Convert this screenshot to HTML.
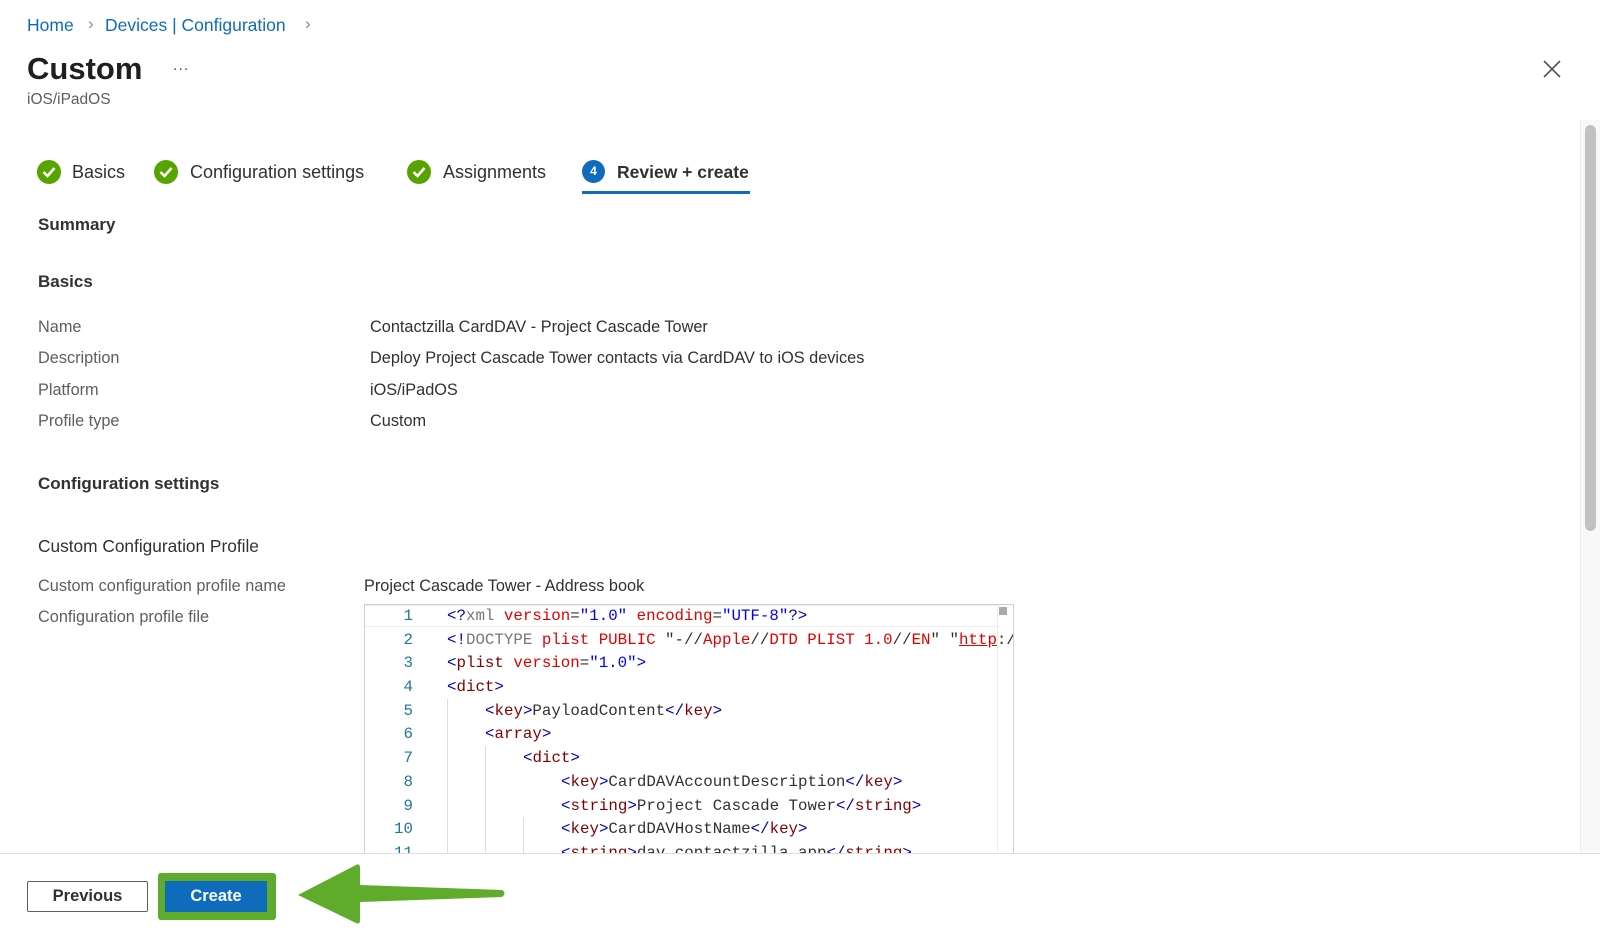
<!DOCTYPE html>
<html><head><meta charset="utf-8"><style>
*{margin:0;padding:0;box-sizing:border-box}
body{width:1600px;height:939px;background:#fff;font-family:"Liberation Sans",sans-serif;color:#323130;position:relative;overflow:hidden}
.a{position:absolute;white-space:nowrap}
.bc{color:#0f6cbd;font-size:17.5px;top:15px}
.lbl{font-size:16.3px;color:#605e5c}
.val{font-size:16.3px;color:#323130}
.h{font-size:17px;font-weight:bold;color:#323130}
.tab{font-size:18px;color:#323130;top:162px}
.chk{width:24px;height:24px;border-radius:50%;background:#57a300;top:160px}
.chk svg{position:absolute;left:5px;top:6px}
.code{font-family:"Liberation Mono",monospace;font-size:15.8px;line-height:23.7px}
.ln{position:absolute;left:0;width:48px;text-align:right;color:#237893}
.t{color:#800000}.at{color:#e50000}.s{color:#0000ff}.b{color:#800000}.p{color:#0000c0}
</style></head><body>
<div class="a bc" style="left:27px">Home</div>
<div class="a" style="left:88px;top:14px;color:#8a8886;font-size:17px">&#x203A;</div>
<div class="a bc" style="left:105px">Devices | Configuration</div>
<div class="a" style="left:305px;top:14px;color:#8a8886;font-size:17px">&#x203A;</div>
<div class="a" style="left:27px;top:51px;font-size:31px;font-weight:bold;color:#201f1e">Custom</div>
<div class="a" style="left:173px;top:57px;font-size:16px;color:#605e5c;letter-spacing:1px">...</div>
<div class="a" style="left:27px;top:91px;font-size:15.5px;color:#605e5c">iOS/iPadOS</div>
<svg class="a" style="left:1543px;top:60px" width="18" height="18"><path d="M1 1L17 17M17 1L1 17" stroke="#555" stroke-width="1.6"/></svg>

<div class="a chk" style="left:37px"><svg width="14" height="12"><path d="M1.5 6L5.5 10L12.5 2" stroke="#fff" stroke-width="2.6" fill="none"/></svg></div>
<div class="a tab" style="left:72px">Basics</div>
<div class="a chk" style="left:154px"><svg width="14" height="12"><path d="M1.5 6L5.5 10L12.5 2" stroke="#fff" stroke-width="2.6" fill="none"/></svg></div>
<div class="a tab" style="left:190px">Configuration settings</div>
<div class="a chk" style="left:407px"><svg width="14" height="12"><path d="M1.5 6L5.5 10L12.5 2" stroke="#fff" stroke-width="2.6" fill="none"/></svg></div>
<div class="a tab" style="left:443px">Assignments</div>
<div class="a" style="left:582px;top:160px;width:23px;height:23px;border-radius:50%;background:#0f6cbd;color:#fff;font-size:12px;font-weight:bold;text-align:center;line-height:23px">4</div>
<div class="a tab" style="left:617px;font-weight:bold;font-size:17.5px">Review + create</div>
<div class="a" style="left:582px;top:191px;width:168px;height:3px;background:#0f6cbd"></div>

<div class="a h" style="left:38px;top:215px">Summary</div>
<div class="a h" style="left:38px;top:272px">Basics</div>
<div class="a lbl" style="left:38px;top:318px">Name</div>
<div class="a val" style="left:370px;top:318px">Contactzilla CardDAV - Project Cascade Tower</div>
<div class="a lbl" style="left:38px;top:349px">Description</div>
<div class="a val" style="left:370px;top:349px">Deploy Project Cascade Tower contacts via CardDAV to iOS devices</div>
<div class="a lbl" style="left:38px;top:381px">Platform</div>
<div class="a val" style="left:370px;top:381px">iOS/iPadOS</div>
<div class="a lbl" style="left:38px;top:412px">Profile type</div>
<div class="a val" style="left:370px;top:412px">Custom</div>
<div class="a h" style="left:38px;top:474px">Configuration settings</div>
<div class="a" style="left:38px;top:536px;font-size:17.3px;color:#323130">Custom Configuration Profile</div>
<div class="a lbl" style="left:38px;top:577px">Custom configuration profile name</div>
<div class="a val" style="left:364px;top:577px">Project Cascade Tower - Address book</div>
<div class="a lbl" style="left:38px;top:608px">Configuration profile file</div>

<div class="a" style="left:364px;top:604px;width:650px;height:260px;border:1px solid #d0d0d0;border-bottom:none;overflow:hidden">
<div class="a" style="left:0;top:0;width:636px;height:22px;border-top:1px solid #eee;border-bottom:1px solid #eee"></div>
<div class="a" style="left:632px;top:0;width:1px;height:260px;background:#ececec"></div>
<div class="a" style="left:634px;top:2px;width:8px;height:8px;background:#aaa"></div>
<div class="a" style="left:82px;top:94px;width:1px;height:170px;background:#ddd"></div>
<div class="a" style="left:120px;top:141px;width:1px;height:120px;background:#ddd"></div>
<div class="a" style="left:158px;top:212px;width:1px;height:50px;background:#ddd"></div>
<div class="a code" style="left:0;top:0;width:640px">
<div style="position:relative;height:23.7px"><span class="ln">1</span><span class="a" style="left:82px"><span class="p">&lt;?</span><span style="color:#777">xml</span> <span class="at">version</span>=<span class="s">"1.0"</span> <span class="at">encoding</span>=<span class="s">"UTF-8"</span><span class="p">?&gt;</span></span></div>
<div style="position:relative;height:23.7px"><span class="ln">2</span><span class="a" style="left:82px"><span class="p">&lt;!</span><span style="color:#777">DOCTYPE</span> <span class="at">plist PUBLIC</span> "-//<span class="at">Apple</span>//<span class="at">DTD PLIST 1.0</span>//<span class="at">EN</span>" "<span class="at" style="text-decoration:underline">http</span>:/</span></div>
<div style="position:relative;height:23.7px"><span class="ln">3</span><span class="a" style="left:82px"><span class="p">&lt;</span><span class="t">plist</span> <span class="at">version</span>=<span class="s">"1.0"</span><span class="p">&gt;</span></span></div>
<div style="position:relative;height:23.7px"><span class="ln">4</span><span class="a" style="left:82px"><span class="p">&lt;</span><span class="t">dict</span><span class="p">&gt;</span></span></div>
<div style="position:relative;height:23.7px"><span class="ln">5</span><span class="a" style="left:120px"><span class="p">&lt;</span><span class="t">key</span><span class="p">&gt;</span>PayloadContent<span class="p">&lt;/</span><span class="t">key</span><span class="p">&gt;</span></span></div>
<div style="position:relative;height:23.7px"><span class="ln">6</span><span class="a" style="left:120px"><span class="p">&lt;</span><span class="t">array</span><span class="p">&gt;</span></span></div>
<div style="position:relative;height:23.7px"><span class="ln">7</span><span class="a" style="left:158px"><span class="p">&lt;</span><span class="t">dict</span><span class="p">&gt;</span></span></div>
<div style="position:relative;height:23.7px"><span class="ln">8</span><span class="a" style="left:196px"><span class="p">&lt;</span><span class="t">key</span><span class="p">&gt;</span>CardDAVAccountDescription<span class="p">&lt;/</span><span class="t">key</span><span class="p">&gt;</span></span></div>
<div style="position:relative;height:23.7px"><span class="ln">9</span><span class="a" style="left:196px"><span class="p">&lt;</span><span class="t">string</span><span class="p">&gt;</span>Project Cascade Tower<span class="p">&lt;/</span><span class="t">string</span><span class="p">&gt;</span></span></div>
<div style="position:relative;height:23.7px"><span class="ln">10</span><span class="a" style="left:196px"><span class="p">&lt;</span><span class="t">key</span><span class="p">&gt;</span>CardDAVHostName<span class="p">&lt;/</span><span class="t">key</span><span class="p">&gt;</span></span></div>
<div style="position:relative;height:23.7px"><span class="ln">11</span><span class="a" style="left:196px"><span class="p">&lt;</span><span class="t">string</span><span class="p">&gt;</span>dav.contactzilla.app<span class="p">&lt;/</span><span class="t">string</span><span class="p">&gt;</span></span></div>
</div></div>

<div class="a" style="left:1580px;top:120px;width:20px;height:734px;background:#f8f8f8;border-left:1px solid #eee"></div>
<div class="a" style="left:1585px;top:125px;width:11px;height:406px;background:#c1c1c1;border-radius:6px"></div>

<div class="a" style="left:0;top:853px;width:1600px;height:86px;background:#fff;border-top:1px solid #e1dfdd"></div>
<div class="a" style="left:27px;top:881px;width:121px;height:31px;border:1px solid #605e5c;border-radius:2px;font-size:16.5px;font-weight:600;text-align:center;line-height:29px;color:#323130">Previous</div>
<div class="a" style="left:158px;top:873px;width:118px;height:47px;background:#5fab2b;border-radius:3px"></div>
<div class="a" style="left:165px;top:881px;width:102px;height:31px;background:#0f6cbd;color:#fff;font-size:16.5px;font-weight:600;text-align:center;line-height:31px">Create</div>
<svg class="a" style="left:290px;top:860px" width="220" height="68"><path d="M8 35L66 5Q70 3 70 8L70 25L212 30Q217 33 212 37L70 42L70 60Q70 65 66 63Z" fill="#5fab2b"/></svg>
</body></html>
